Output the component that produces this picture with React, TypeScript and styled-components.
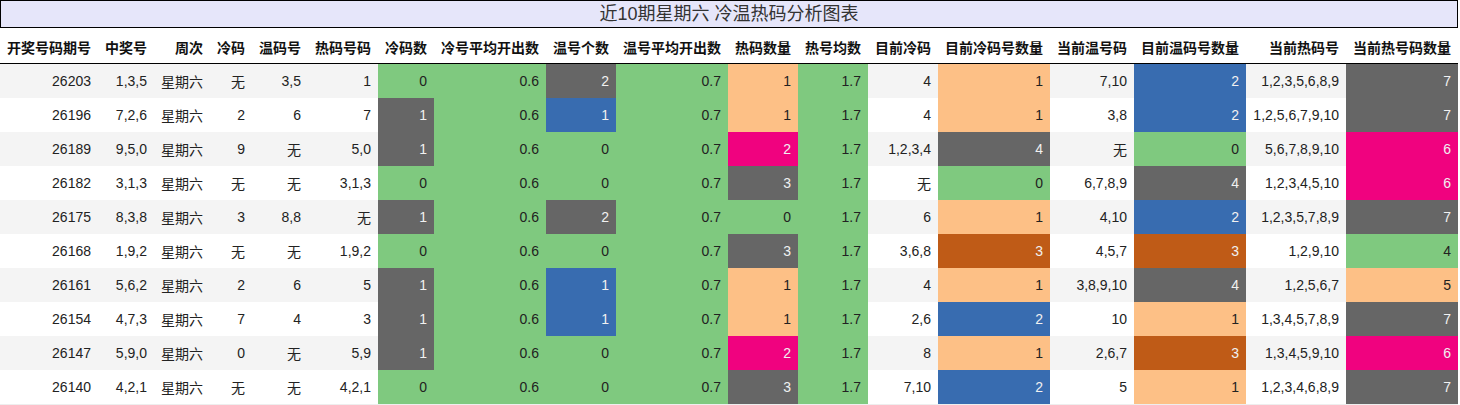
import React from "react";
import styled, { createGlobalStyle } from "styled-components";

const GlobalStyle = createGlobalStyle`
  html, body { margin: 0; padding: 0; background: #ffffff; }
  body { font-family: "Liberation Sans", "Noto Sans CJK SC", sans-serif; }
`;

const COLS = [98, 56, 56, 42, 56, 70, 56, 112, 70, 112, 70, 70, 70, 112, 84, 112, 100, 112];
const TEMPLATE = COLS.map((w) => `${w}px`).join(" ");

type Tone = "green" | "orange" | "blue" | "pink" | "brown" | "gray" | undefined;

const TONES: Record<string, { bg: string; fg: string }> = {
  green: { bg: "#7fc97f", fg: "#222222" },
  orange: { bg: "#fdc086", fg: "#222222" },
  blue: { bg: "#386cb0", fg: "#f1f1f1" },
  pink: { bg: "#f0027f", fg: "#f1f1f1" },
  brown: { bg: "#bf5b17", fg: "#f1f1f1" },
  gray: { bg: "#666666", fg: "#f1f1f1" },
};

const Page = styled.div`
  width: 1458px;
  display: flex;
  flex-direction: column;
`;

const Caption = styled.div`
  height: 26px;
  border: 1px solid #000000;
  background: #e6e6fa;
  color: #333333;
  font-size: 18px;
  line-height: 26px;
  text-align: center;
  font-family: "Liberation Sans", "Noto Sans CJK SC", sans-serif;
`;

const HeaderRow = styled.div`
  display: grid;
  grid-template-columns: ${TEMPLATE};
  height: 36px;
  border-bottom: 1px solid #000000;
  box-sizing: border-box;
`;

const HeadCell = styled.div`
  padding: 0 7px 5px 7px;
  display: flex;
  align-items: flex-end;
  justify-content: flex-end;
  font-size: 14px;
  font-weight: bold;
  line-height: 20px;
  color: #111111;
  white-space: nowrap;
`;

const Row = styled.div<{ $striped: boolean }>`
  display: grid;
  grid-template-columns: ${TEMPLATE};
  height: 34px;
  background: ${(p) => (p.$striped ? "#f4f4f4" : "#ffffff")};
`;

const Cell = styled.div<{ $tone?: Tone }>`
  padding: 0 7px;
  display: flex;
  align-items: center;
  justify-content: flex-end;
  font-size: 14px;
  color: ${(p) => (p.$tone ? TONES[p.$tone].fg : "#222222")};
  background: ${(p) => (p.$tone ? TONES[p.$tone].bg : "transparent")};
  white-space: nowrap;
`;

const BottomLine = styled.div`
  height: 1px;
  background: #eeeeee;
`;

const HEADERS = [
  "开奖号码期号", "中奖号", "周次", "冷码", "温码号", "热码号码", "冷码数",
  "冷号平均开出数", "温号个数", "温号平均开出数", "热码数量", "热号均数",
  "目前冷码", "目前冷码号数量", "当前温号码", "目前温码号数量", "当前热码号", "当前热号码数量",
];

type RowData = {
  id: string; win: string; cold: string; warm: string; hot: string;
  coldN: [string, Tone]; warmN: [string, Tone]; hotN: [string, Tone];
  curCold: string; curColdN: [string, Tone];
  curWarm: string; curWarmN: [string, Tone];
  curHot: string; curHotN: [string, Tone];
};

const g = (v: string): [string, Tone] => [v, "green"];
const o = (v: string): [string, Tone] => [v, "orange"];
const b = (v: string): [string, Tone] => [v, "blue"];
const p = (v: string): [string, Tone] => [v, "pink"];
const br = (v: string): [string, Tone] => [v, "brown"];
const gr = (v: string): [string, Tone] => [v, "gray"];

const DATA: RowData[] = [
  { id: "26203", win: "1,3,5", cold: "无", warm: "3,5", hot: "1", coldN: g("0"), warmN: gr("2"), hotN: o("1"), curCold: "4", curColdN: o("1"), curWarm: "7,10", curWarmN: b("2"), curHot: "1,2,3,5,6,8,9", curHotN: gr("7") },
  { id: "26196", win: "7,2,6", cold: "2", warm: "6", hot: "7", coldN: gr("1"), warmN: b("1"), hotN: o("1"), curCold: "4", curColdN: o("1"), curWarm: "3,8", curWarmN: b("2"), curHot: "1,2,5,6,7,9,10", curHotN: gr("7") },
  { id: "26189", win: "9,5,0", cold: "9", warm: "无", hot: "5,0", coldN: gr("1"), warmN: g("0"), hotN: p("2"), curCold: "1,2,3,4", curColdN: gr("4"), curWarm: "无", curWarmN: g("0"), curHot: "5,6,7,8,9,10", curHotN: p("6") },
  { id: "26182", win: "3,1,3", cold: "无", warm: "无", hot: "3,1,3", coldN: g("0"), warmN: g("0"), hotN: gr("3"), curCold: "无", curColdN: g("0"), curWarm: "6,7,8,9", curWarmN: gr("4"), curHot: "1,2,3,4,5,10", curHotN: p("6") },
  { id: "26175", win: "8,3,8", cold: "3", warm: "8,8", hot: "无", coldN: gr("1"), warmN: gr("2"), hotN: g("0"), curCold: "6", curColdN: o("1"), curWarm: "4,10", curWarmN: b("2"), curHot: "1,2,3,5,7,8,9", curHotN: gr("7") },
  { id: "26168", win: "1,9,2", cold: "无", warm: "无", hot: "1,9,2", coldN: g("0"), warmN: g("0"), hotN: gr("3"), curCold: "3,6,8", curColdN: br("3"), curWarm: "4,5,7", curWarmN: br("3"), curHot: "1,2,9,10", curHotN: g("4") },
  { id: "26161", win: "5,6,2", cold: "2", warm: "6", hot: "5", coldN: gr("1"), warmN: b("1"), hotN: o("1"), curCold: "4", curColdN: o("1"), curWarm: "3,8,9,10", curWarmN: gr("4"), curHot: "1,2,5,6,7", curHotN: o("5") },
  { id: "26154", win: "4,7,3", cold: "7", warm: "4", hot: "3", coldN: gr("1"), warmN: b("1"), hotN: o("1"), curCold: "2,6", curColdN: b("2"), curWarm: "10", curWarmN: o("1"), curHot: "1,3,4,5,7,8,9", curHotN: gr("7") },
  { id: "26147", win: "5,9,0", cold: "0", warm: "无", hot: "5,9", coldN: gr("1"), warmN: g("0"), hotN: p("2"), curCold: "8", curColdN: o("1"), curWarm: "2,6,7", curWarmN: br("3"), curHot: "1,3,4,5,9,10", curHotN: p("6") },
  { id: "26140", win: "4,2,1", cold: "无", warm: "无", hot: "4,2,1", coldN: g("0"), warmN: g("0"), hotN: gr("3"), curCold: "7,10", curColdN: b("2"), curWarm: "5", curWarmN: o("1"), curHot: "1,2,3,4,6,8,9", curHotN: gr("7") },
];

export default function App() {
  return (
    <>
      <GlobalStyle />
      <Page>
        <Caption>近10期星期六 冷温热码分析图表</Caption>
        <HeaderRow>
          {HEADERS.map((h) => (
            <HeadCell key={h}>{h}</HeadCell>
          ))}
        </HeaderRow>
        {DATA.map((r, i) => (
          <Row key={r.id} $striped={i % 2 === 0}>
            <Cell>{r.id}</Cell>
            <Cell>{r.win}</Cell>
            <Cell>星期六</Cell>
            <Cell>{r.cold}</Cell>
            <Cell>{r.warm}</Cell>
            <Cell>{r.hot}</Cell>
            <Cell $tone={r.coldN[1]}>{r.coldN[0]}</Cell>
            <Cell $tone="green">0.6</Cell>
            <Cell $tone={r.warmN[1]}>{r.warmN[0]}</Cell>
            <Cell $tone="green">0.7</Cell>
            <Cell $tone={r.hotN[1]}>{r.hotN[0]}</Cell>
            <Cell $tone="green">1.7</Cell>
            <Cell>{r.curCold}</Cell>
            <Cell $tone={r.curColdN[1]}>{r.curColdN[0]}</Cell>
            <Cell>{r.curWarm}</Cell>
            <Cell $tone={r.curWarmN[1]}>{r.curWarmN[0]}</Cell>
            <Cell>{r.curHot}</Cell>
            <Cell $tone={r.curHotN[1]}>{r.curHotN[0]}</Cell>
          </Row>
        ))}
        <BottomLine />
      </Page>
    </>
  );
}
